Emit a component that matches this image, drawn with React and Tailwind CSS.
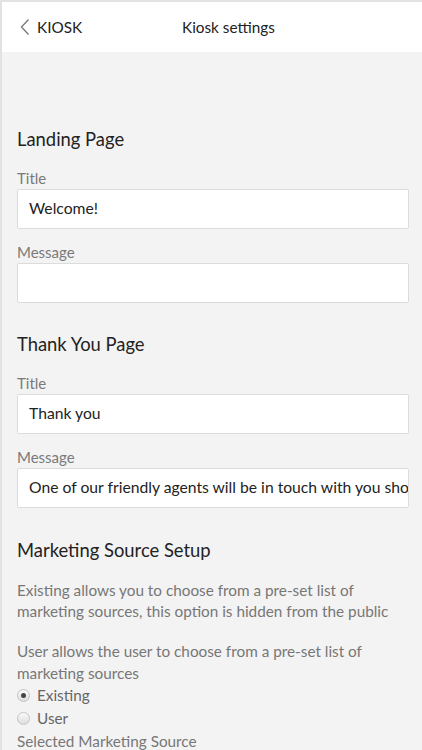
import React from 'react'

function Field({ label, value }) {
  return (
    <div>
      <div className="text-[15px] leading-[20px] text-[#7a7a7a] mb-[1px]">{label}</div>
      <div className="h-[40px] bg-white border border-[#dcdcdc] rounded-[2px] px-[11px] flex items-center overflow-hidden">
        <span className="text-[15.7px] text-[#222] whitespace-nowrap">{value}</span>
      </div>
    </div>
  )
}

function Radio({ checked, label }) {
  return (
    <div className="flex items-center gap-[7px] h-[23px]">
      <span className="w-[13px] h-[13px] rounded-full border border-[#c4c4c4] bg-gradient-to-b from-[#fafafa] to-[#dedede] flex items-center justify-center">
        {checked && <span className="w-[5px] h-[5px] rounded-full bg-[#444]" />}
      </span>
      <span className="text-[15.3px] text-[#666]">{label}</span>
    </div>
  )
}

export default function App() {
  return (
    <div className="w-[422px] h-[750px] overflow-hidden bg-[#f3f3f3] border-l-[2px] border-t-[2px] border-[#e2e2e2] font-['Lato','Liberation_Sans',sans-serif]">
      {/* Header */}
      <div className="h-[50px] bg-white flex items-center pl-[18px]">
        <div className="flex items-center gap-[7px] w-[162px]">
          <svg width="10" height="18" viewBox="0 0 10 18" fill="none" stroke="#777" strokeWidth="1.3">
            <path d="M8.5 1.5 L1.5 9 L8.5 16.5" />
          </svg>
          <span className="text-[15.3px] text-[#222]">KIOSK</span>
        </div>
        <span className="text-[15.3px] text-[#222]">Kiosk settings</span>
      </div>

      <div className="pl-[15px] pr-[13px]">
        {/* Landing Page */}
        <h2 className="text-[18.4px] text-[#222] mt-[75px] leading-[24px]">Landing Page</h2>
        <div className="mt-[17px] flex flex-col gap-[13px]">
          <Field label="Title" value="Welcome!" />
          <Field label="Message" value="" />
        </div>

        {/* Thank You Page */}
        <h2 className="text-[18.4px] text-[#222] mt-[29px] leading-[24px]">Thank You Page</h2>
        <div className="mt-[17px] flex flex-col gap-[13px]">
          <Field label="Title" value="Thank you" />
          <Field label="Message" value="One of our friendly agents will be in touch with you shortly." />
        </div>

        {/* Marketing Source Setup */}
        <h2 className="text-[18.4px] text-[#222] mt-[30px] leading-[24px]">Marketing Source Setup</h2>
        <p className="mt-[18px] text-[15.3px] leading-[21px] text-[#777]">
          Existing allows you to choose from a pre-set list of marketing sources, this option is hidden from the public
        </p>
        <p className="mt-[18px] text-[15.3px] leading-[22px] text-[#777]">
          User allows the user to choose from a pre-set list of marketing sources
        </p>
        <Radio checked label="Existing" />
        <Radio label="User" />
        <div className="text-[15.3px] leading-[22px] text-[#777]">Selected Marketing Source</div>
      </div>
    </div>
  )
}
